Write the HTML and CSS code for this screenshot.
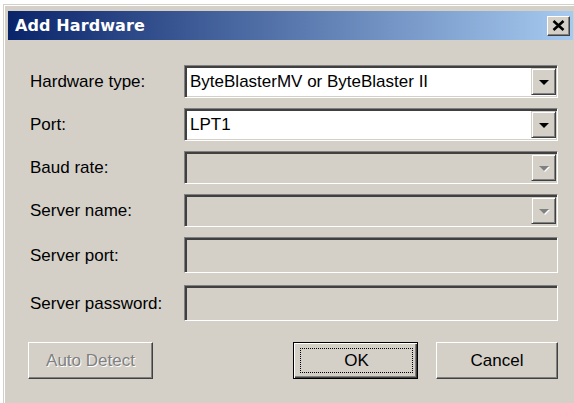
FILE: index.html
```html
<!DOCTYPE html>
<html lang="en">
<head>
<meta charset="utf-8">
<title>Add Hardware</title>
<link rel="stylesheet" href="styles.css">
</head>
<body>
<div class="dialog">
  <div class="titlebar">
    <span class="title">Add Hardware</span>
    <div class="close" aria-label="Close">
      <svg width="13" height="11" viewBox="0 0 13 11" aria-hidden="true">
        <path d="M1.5 1 L11.5 10 M11.5 1 L1.5 10" stroke="#000" stroke-width="2.6" fill="none"/>
      </svg>
    </div>
  </div>

  <div class="content">
    <div class="row">
      <div class="label">Hardware type:</div>
      <div class="combo">
        <span class="value">ByteBlasterMV or ByteBlaster II</span>
        <span class="drop"><span class="arrow"></span></span>
      </div>
    </div>
    <div class="row">
      <div class="label">Port:</div>
      <div class="combo">
        <span class="value">LPT1</span>
        <span class="drop"><span class="arrow"></span></span>
      </div>
    </div>
    <div class="row">
      <div class="label">Baud rate:</div>
      <div class="combo disabled">
        <span class="value"></span>
        <span class="drop"><span class="arrow"></span></span>
      </div>
    </div>
    <div class="row">
      <div class="label">Server name:</div>
      <div class="combo disabled">
        <span class="value"></span>
        <span class="drop"><span class="arrow"></span></span>
      </div>
    </div>
    <div class="row row-edit">
      <div class="label">Server port:</div>
      <div class="edit"></div>
    </div>
    <div class="row row-edit">
      <div class="label">Server password:</div>
      <div class="edit"></div>
    </div>

    <div class="buttons">
      <div class="btn btn-auto disabled">Auto Detect</div>
      <div class="btn btn-ok default"><span class="focus">OK</span></div>
      <div class="btn btn-cancel">Cancel</div>
    </div>
  </div>
</div>
</body>
</html>
```

FILE: styles.css
```css
html, body {
  margin: 0;
  padding: 0;
  background: #fff;
  width: 574px;
  height: 403px;
  overflow: hidden;
}

body {
  font-family: "Liberation Sans", Arial, sans-serif;
  font-size: 17px;
  color: #000;
}

/* Window frame */
.dialog {
  margin: 4px 0 0 3px;
  width: 571px;
  height: 399px;
  box-sizing: border-box;
  background: #d4d0c8;
  border-top: 1px solid #d4d0c8;
  border-left: 1px solid #d4d0c8;
  box-shadow: inset 1px 1px #fff;
  padding: 6px 0 0 4px;
}

/* Caption bar */
.titlebar {
  width: 565px;
  height: 29px;
  box-sizing: border-box;
  padding-left: 7px;
  display: flex;
  align-items: center;
  background: linear-gradient(to right, #0a246a, #a6caf0);
}

.title {
  font-family: "DejaVu Sans", Verdana, sans-serif;
  font-weight: bold;
  font-size: 16px;
  color: #fff;
  letter-spacing: 0.1px;
}

.close {
  margin-left: auto;
  margin-right: 3px;
  width: 23px;
  height: 20px;
  box-sizing: border-box;
  background: #d4d0c8;
  border-top: 1px solid #fff;
  border-left: 1px solid #fff;
  border-right: 1px solid #404040;
  border-bottom: 1px solid #404040;
  box-shadow: inset -1px -1px #808080;
  display: flex;
  align-items: center;
  justify-content: center;
}

/* Form area */
.content {
  padding: 25px 0 0 22px;
}

.row {
  display: flex;
  align-items: center;
  height: 33px;
  margin-bottom: 10px;
}

.row-edit {
  height: 36px;
  margin-bottom: 12px;
}

.label {
  width: 154px;
  flex: none;
  padding-top: 1px;
}

/* Sunken field frame shared by combos and edits */
.combo, .edit {
  width: 374px;
  height: 100%;
  box-sizing: border-box;
  border-top: 1px solid #808080;
  border-left: 1px solid #808080;
  border-right: 1px solid #fff;
  border-bottom: 1px solid #fff;
  box-shadow: inset 2px 2px #404040, inset -1px -1px #d4d0c8;
}

.combo {
  background: #fff;
  display: flex;
  align-items: center;
  padding: 2px 1px 2px 5px;
}

.combo .value {
  flex: 1;
  padding-top: 1px;
}

.combo.disabled,
.edit {
  background: #d4d0c8;
}

.drop {
  width: 25px;
  height: 27px;
  box-sizing: border-box;
  background: #d4d0c8;
  border-top: 1px solid #d4d0c8;
  border-left: 1px solid #d4d0c8;
  border-right: 1px solid #404040;
  border-bottom: 1px solid #404040;
  box-shadow: inset 1px 1px #fff, inset -1px -1px #808080;
  display: flex;
  align-items: center;
  justify-content: center;
}

.arrow {
  width: 0;
  height: 0;
  border-left: 5px solid transparent;
  border-right: 5px solid transparent;
  border-top: 5px solid #000;
  margin-top: 1px;
}

.combo.disabled .arrow {
  border-top-color: #808080;
  filter: drop-shadow(1px 1px 0 #fff);
}

/* Push buttons */
.buttons {
  display: flex;
  margin-top: 21px;
}

.btn {
  height: 37px;
  box-sizing: border-box;
  background: #d4d0c8;
  border-top: 1px solid #fff;
  border-left: 1px solid #fff;
  border-right: 1px solid #404040;
  border-bottom: 1px solid #404040;
  box-shadow: inset -1px -1px #808080;
  display: flex;
  align-items: center;
  justify-content: center;
}

.btn.disabled {
  color: #808080;
  text-shadow: 1px 1px 0 #fff;
}

.btn-auto {
  width: 125px;
  margin-left: -2px;
}

.btn-ok {
  width: 125px;
  margin-left: 140px;
}

.btn.default {
  border: 1px solid #000;
  box-shadow: inset 1px 1px #fff, inset -1px -1px #404040, inset -2px -2px #808080;
}

.focus {
  flex: 1;
  align-self: stretch;
  margin: 5px 4px 5px 6px;
  border: 1px dotted #000;
  display: flex;
  align-items: center;
  justify-content: center;
}

.btn-cancel {
  width: 122px;
  margin-left: 18px;
}
```
